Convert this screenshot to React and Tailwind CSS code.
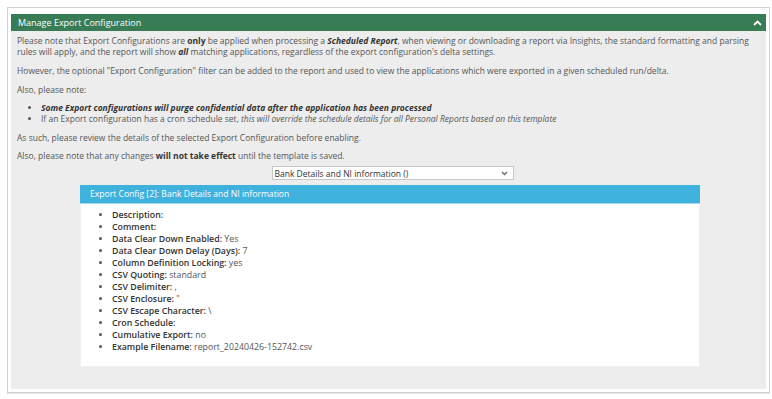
import React from "react";

export default function App() {
  const items = [
    ["Description:", ""],
    ["Comment:", ""],
    ["Data Clear Down Enabled:", "Yes"],
    ["Data Clear Down Delay (Days):", "7"],
    ["Column Definition Locking:", "yes"],
    ["CSV Quoting:", "standard"],
    ["CSV Delimiter:", ","],
    ["CSV Enclosure:", "\""],
    ["CSV Escape Character:", "\\"],
    ["Cron Schedule:", ""],
    ["Cumulative Export:", "no"],
    ["Example Filename:", "report_20240426-152742.csv"],
  ];
  return (
    <div className="bg-white w-[772px] h-[399px] pt-[7px] pl-[7px]" style={{ fontFamily: '"Open Sans", "Noto Sans", sans-serif' }}>
      <div className="w-[763px] border border-[#d2d2d2] pt-[6px] px-[3px] pb-[3px] shadow-[0_1px_0_#e4e4e4]">
        <div className="bg-[#387c55] h-[17px] flex items-center justify-between pl-[7px] pr-[4px] text-white text-[9px]">
          <span>Manage Export Configuration</span>
          <svg width="9" height="6" viewBox="0 0 9 6" fill="none">
            <path d="M1 5L4.5 1.5L8 5" stroke="white" strokeWidth="1.8" />
          </svg>
        </div>
        <div className="bg-[#ededed] pt-[4px] pl-[6px] pr-[6px] pb-[22px] text-[8.5px] leading-[11px] text-[#555]">
          <p className="mb-[8px]">
            Please note that Export Configurations are <span className="font-bold text-[#333]">only</span> be applied when processing a{" "}
            <span className="font-bold italic text-[#333]">Scheduled Report</span>, when viewing or downloading a report via Insights, the standard formatting and parsing rules will apply, and the report will show{" "}
            <span className="font-bold italic text-[#333]">all</span> matching applications, regardless of the export configuration's delta settings.
          </p>
          <p className="mb-[8px]">
            However, the optional "Export Configuration" filter can be added to the report and used to view the applications which were exported in a given scheduled run/delta.
          </p>
          <p className="mb-[6px]">Also, please note:</p>
          <ul className="list-disc pl-[24px] mb-[8px]">
            <li className="pt-[1px]">
              <span className="font-bold italic text-[#333]">Some Export configurations will purge confidential data after the application has been processed</span>
            </li>
            <li>
              If an Export configuration has a cron schedule set, <span className="italic">this will override the schedule details for all Personal Reports based on this template</span>
            </li>
          </ul>
          <p className="mb-[7px]">As such, please review the details of the selected Export Configuration before enabling.</p>
          <p className="mb-[5px]">
            Also, please note that any changes <span className="font-bold text-[#333]">will not take effect</span> until the template is saved.
          </p>
          <div className="flex justify-center">
            <div className="ml-[8px] w-[242px] h-[14px] bg-white border border-[#c8c8c8] flex items-center justify-between pl-[2px] pr-[5px] text-[#333] text-[8.5px]">
              <span>Bank Details and NI information ()</span>
              <svg width="7" height="5" viewBox="0 0 7 5" fill="none">
                <path d="M1 1L3.5 3.5L6 1" stroke="#666" strokeWidth="1.3" />
              </svg>
            </div>
          </div>
          <div className="ml-[63px] w-[620px] mt-[5px]">
            <div className="bg-[#3fb1dd] h-[19px] border-b border-[#a6daee] flex items-center pl-[10px] text-white text-[8.6px]">
              Export Config [2]: Bank Details and NI information
            </div>
            <div className="bg-white border-x border-b border-[#f0f0f0] pt-[5px] pb-[13px]">
              <ul className="list-disc pl-[31px] text-[#555] text-[8.8px] leading-[12px]">
                {items.map(([k, v]) => (
                  <li key={k}>
                    <span className="font-semibold text-[#333]">{k}</span> {v}
                  </li>
                ))}
              </ul>
            </div>
          </div>
        </div>
      </div>
    </div>
  );
}
